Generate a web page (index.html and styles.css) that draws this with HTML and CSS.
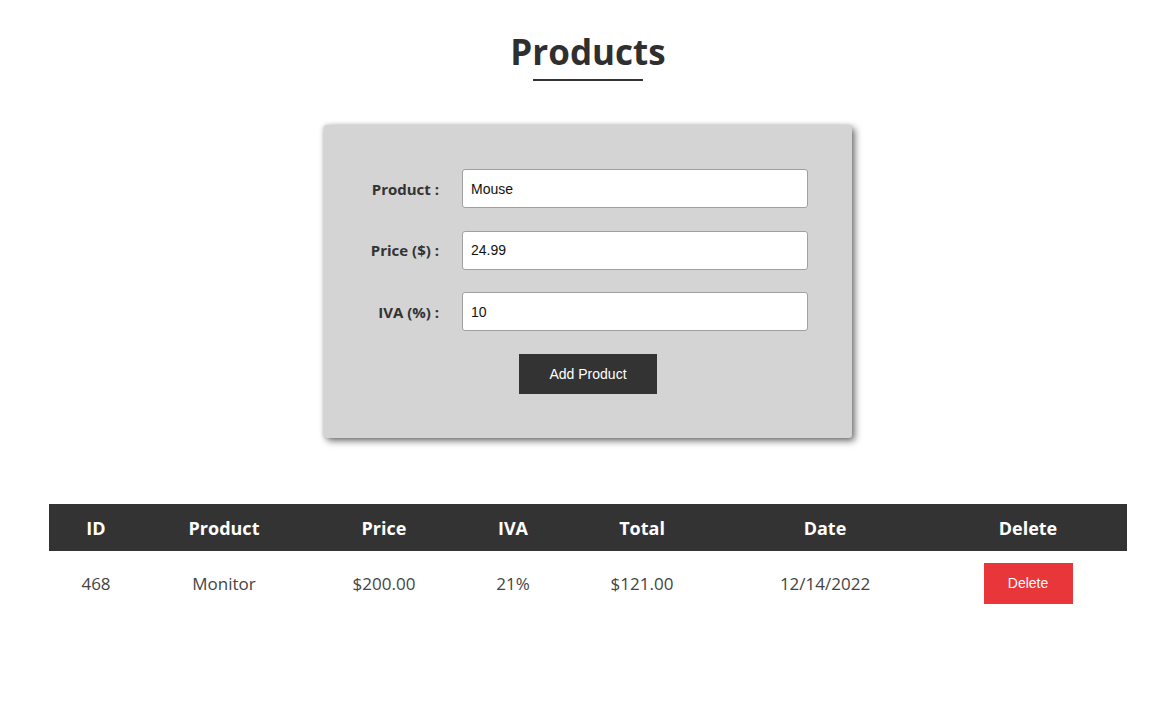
FILE: index.html
```html
<!DOCTYPE html>
<html lang="en">
<head>
<meta charset="utf-8">
<title>Products</title>
<link rel="stylesheet" href="styles.css">
</head>
<body>
<main class="page">
  <h1 class="title">Products</h1>
  <form class="card">
    <div class="form-grid">
      <label class="label" for="product">Product :</label>
      <input class="input" id="product" type="text" value="Mouse">
      <label class="label" for="price">Price ($) :</label>
      <input class="input" id="price" type="text" value="24.99">
      <label class="label" for="iva">IVA (%) :</label>
      <input class="input" id="iva" type="text" value="10">
    </div>
    <button class="add-btn" type="button">Add Product</button>
  </form>
  <table class="table">
    <colgroup>
      <col class="c1"><col class="c2"><col class="c3"><col class="c4"><col class="c5"><col class="c6"><col class="c7">
    </colgroup>
    <thead>
      <tr><th>ID</th><th>Product</th><th>Price</th><th>IVA</th><th>Total</th><th>Date</th><th>Delete</th></tr>
    </thead>
    <tbody>
      <tr><td>468</td><td>Monitor</td><td>$200.00</td><td>21%</td><td>$121.00</td><td>12/14/2022</td><td><button class="del-btn" type="button">Delete</button></td></tr>
    </tbody>
  </table>
</main>
</body>
</html>
```
FILE: styles.css
```css
html, body {
  margin: 0;
  padding: 0;
  background: #fff;
}
body {
  font-family: "Open Sans", "Liberation Sans", sans-serif;
  color: #333;
}
.page {
  padding-left: 12px;
  padding-top: 29px;
  display: flex;
  flex-direction: column;
  align-items: center;
}
.title {
  margin: 0;
  font-size: 35px;
  font-weight: 700;
  line-height: 46px;
  color: #2f2f2f;
  padding-bottom: 6px;
}
.title::after {
  content: "";
  display: block;
  width: 110px;
  height: 2px;
  background: #333;
  margin: 4px auto 0;
}
.card {
  margin-top: 38px;
  width: 528px;
  box-sizing: border-box;
  background: #d4d4d4;
  border-radius: 3px;
  box-shadow: 3px 3px 7px rgba(0,0,0,0.55), -1px 0 4px rgba(0,0,0,0.15);
  padding: 44px 0 44px;
  display: flex;
  flex-direction: column;
  align-items: center;
}
.form-grid {
  display: grid;
  grid-template-columns: 70px 346px;
  column-gap: 23px;
  row-gap: 22.5px;
  align-items: center;
  margin-left: 1px;
}
.label {
  text-align: right;
  font-size: 15px;
  font-weight: 700;
  color: #333;
  white-space: nowrap;
}
.input {
  box-sizing: border-box;
  height: 39px;
  width: 346px;
  border: 1px solid #a0a0a0;
  border-radius: 3px;
  padding: 0 8px;
  font-family: "Liberation Sans", Arial, sans-serif;
  font-size: 14px;
  color: #111;
  background: #fff;
}
.add-btn {
  margin-top: 22.5px;
  width: 138px;
  height: 40px;
  border: none;
  background: #333;
  color: #fff;
  font-family: "Liberation Sans", Arial, sans-serif;
  font-size: 14px;
}
.table {
  margin-top: 66px;
  width: 1078px;
  border-collapse: collapse;
  table-layout: fixed;
}
.c1 { width: 94px; }
.c2 { width: 162px; }
.c3 { width: 158px; }
.c4 { width: 100px; }
.c5 { width: 158px; }
.c6 { width: 208px; }
.c7 { width: 198px; }
.table th {
  background: #333;
  color: #fff;
  font-size: 18px;
  font-weight: 700;
  height: 46px;
  padding: 1px 0 0;
  text-align: center;
}
.table td {
  text-align: center;
  font-size: 17px;
  color: #444;
  padding: 12px 0;
}
.del-btn {
  width: 89px;
  height: 41px;
  border: none;
  background: #e8363a;
  color: #fff;
  font-family: "Liberation Sans", Arial, sans-serif;
  font-size: 14px;
  vertical-align: middle;
}
```
